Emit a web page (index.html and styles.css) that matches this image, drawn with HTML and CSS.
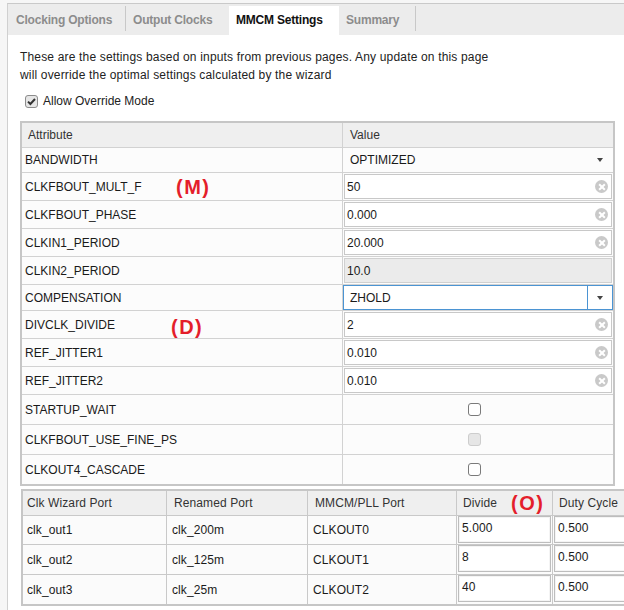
FILE: index.html
```html
<!DOCTYPE html>
<html>
<head>
<meta charset="utf-8">
<link rel="stylesheet" href="styles.css">
</head>
<body>
<div class="panel">
  <div class="tabs">
    <div class="tab w1">Clocking Options</div>
    <div class="sep"></div>
    <div class="tab w2">Output Clocks</div>
    <div class="tab active">MMCM Settings</div>
    <div class="tab w4">Summary</div>
    <div class="sep"></div>
  </div>
  <div class="content">
    <p class="intro">These are the settings based on inputs from previous pages. Any update on this page<br>will override the optimal settings calculated by the wizard</p>
    <div class="override">
      <span class="cb cb-on"><svg width="13" height="13" viewBox="0 0 13 13"><path d="M3 6.6 L5.4 9 L10 4" fill="none" stroke="#333" stroke-width="2"/></svg></span>
      <span>Allow Override Mode</span>
    </div>

    <div class="ptable">
      <div class="prow head h24"><div class="attr">Attribute</div><div class="val">Value</div></div>
      <div class="prow h25"><div class="attr">BANDWIDTH</div><div class="val combo-plain"><span>OPTIMIZED</span><span class="arrow"></span></div></div>
      <div class="prow h28"><div class="attr">CLKFBOUT_MULT_F<span class="note note-m">(M)</span></div><div class="val"><div class="field"><span>50</span><span class="clear"></span></div></div></div>
      <div class="prow h28"><div class="attr">CLKFBOUT_PHASE</div><div class="val"><div class="field"><span>0.000</span><span class="clear"></span></div></div></div>
      <div class="prow h28"><div class="attr">CLKIN1_PERIOD</div><div class="val"><div class="field"><span>20.000</span><span class="clear"></span></div></div></div>
      <div class="prow h28"><div class="attr">CLKIN2_PERIOD</div><div class="val"><div class="field disabled"><span>10.0</span></div></div></div>
      <div class="prow h26"><div class="attr">COMPENSATION</div><div class="val"><div class="combo"><span class="combo-text">ZHOLD</span><span class="combo-btn"><span class="arrow"></span></span></div></div></div>
      <div class="prow h28"><div class="attr">DIVCLK_DIVIDE<span class="note note-d">(D)</span></div><div class="val"><div class="field"><span>2</span><span class="clear"></span></div></div></div>
      <div class="prow h28"><div class="attr">REF_JITTER1</div><div class="val"><div class="field"><span>0.010</span><span class="clear"></span></div></div></div>
      <div class="prow h28"><div class="attr">REF_JITTER2</div><div class="val"><div class="field"><span>0.010</span><span class="clear"></span></div></div></div>
      <div class="prow h30"><div class="attr">STARTUP_WAIT</div><div class="val center"><span class="cb"></span></div></div>
      <div class="prow h30"><div class="attr">CLKFBOUT_USE_FINE_PS</div><div class="val center"><span class="cb cb-dis"></span></div></div>
      <div class="prow h30"><div class="attr">CLKOUT4_CASCADE</div><div class="val center"><span class="cb"></span></div></div>
    </div>

    <div class="ctable">
      <div class="crow chead">
        <div class="c c1">Clk Wizard Port</div>
        <div class="c c2">Renamed Port</div>
        <div class="c c3">MMCM/PLL Port</div>
        <div class="c c4">Divide<span class="note note-o">(O)</span></div>
        <div class="c c5">Duty Cycle</div>
      </div>
      <div class="crow r1">
        <div class="c c1">clk_out1</div>
        <div class="c c2">clk_200m</div>
        <div class="c c3">CLKOUT0</div>
        <div class="c c4"><div class="cfield">5.000</div></div>
        <div class="c c5"><div class="cfield wide">0.500</div></div>
      </div>
      <div class="crow r2">
        <div class="c c1">clk_out2</div>
        <div class="c c2">clk_125m</div>
        <div class="c c3">CLKOUT1</div>
        <div class="c c4"><div class="cfield">8</div></div>
        <div class="c c5"><div class="cfield wide">0.500</div></div>
      </div>
      <div class="crow r2">
        <div class="c c1">clk_out3</div>
        <div class="c c2">clk_25m</div>
        <div class="c c3">CLKOUT2</div>
        <div class="c c4"><div class="cfield">40</div></div>
        <div class="c c5"><div class="cfield wide">0.500</div></div>
      </div>
    </div>
  </div>
</div>
</body>
</html>
```

FILE: styles.css
```css
* { box-sizing: border-box; }
html, body { margin: 0; padding: 0; overflow: hidden; }
body {
  width: 624px;
  height: 610px;
  background: #f6f6f6;
  font-family: "Liberation Sans", Arial, sans-serif;
  font-size: 12px;
  color: #1a1a1a;
}
.panel {
  margin-left: 7px;
  margin-top: 3px;
  height: 607px;
  background: #fff;
  border-left: 1px solid #d0d0d0;
  border-top: 1px solid #c9c9c9;
  overflow: hidden;
}
.tabs {
  display: flex;
  align-items: stretch;
  height: 31px;
  background: #ececec;
}
.tab {
  display: flex;
  align-items: center;
  padding-left: 7px;
  font-weight: bold;
  color: #8c8c8c;
  letter-spacing: -0.2px;
}
.w1 { width: 117px; padding-left: 8px; }
.w2 { width: 103px; }
.w4 { width: 76px; }
.tab.active {
  width: 110px;
  margin-top: 2px;
  background: #fff;
  color: #111;
  padding-bottom: 2px;
}
.sep {
  width: 1px;
  background: #c8c8c8;
  margin: 2px 0 4px;
}
.content {
  padding-left: 12px;
}
.intro {
  margin: 13px 0 0;
  line-height: 18px;
  color: #222;
  letter-spacing: 0.17px;
}
.override {
  display: flex;
  align-items: center;
  height: 18px;
  margin-top: 8px;
  padding-left: 5px;
  gap: 5px;
  color: #222;
}
.cb {
  display: inline-block;
  width: 13px;
  height: 13px;
  border: 1px solid #7a7a7a;
  border-radius: 3px;
  background: #fff;
  position: relative;
}
.cb svg { position: absolute; left: -1px; top: -1px; }
.cb-on { background: #e6e6e6; border-color: #8c8c8c; }
.cb-dis { background: #e6e6e6; border-color: #cdcdcd; }

/* properties table */
.ptable {
  margin-top: 11px;
  width: 595px;
  border: 2px solid #c6c6c6;
  background: #fcfcfc;
}
.prow {
  display: flex;
  border-top: 1px solid #d2d2d2;
}
.prow.head { border-top: 0; background: #efefef; color: #333; }
.h24 { height: 24px; }
.h25 { height: 25px; }
.h26 { height: 26px; }
.h28 { height: 28px; }
.h30 { height: 30px; }
.attr {
  position: relative;
  width: 321px;
  flex: none;
  border-right: 1px solid #d2d2d2;
  display: flex;
  align-items: center;
  padding-left: 3px;
}
.head .attr { padding-left: 6px; }
.val {
  flex: 1;
  display: flex;
  align-items: center;
  padding-left: 7px;
}
.val:has(.field), .val:has(.combo) { padding-left: 0; }
.val.center { justify-content: center; padding-left: 0; padding-right: 8px; }
.combo-plain { justify-content: space-between; padding-right: 10px; }
.arrow {
  width: 0;
  height: 0;
  border-left: 3.5px solid transparent;
  border-right: 3.5px solid transparent;
  border-top: 4px solid #444;
}
.field {
  margin-left: 1px;
  width: 268px;
  height: 25px;
  border: 1px solid #c8c8c8;
  background: #fff;
  display: flex;
  align-items: center;
  justify-content: space-between;
  padding: 0 2px 0 2px;
}
.field.disabled { background: #ebebeb; border-color: #d0d0d0; }
.clear {
  width: 13px;
  height: 13px;
  border-radius: 50%;
  background: #c9c9c9;
  position: relative;
  margin-right: 1px;
}
.clear::before, .clear::after {
  content: "";
  position: absolute;
  left: 2.5px;
  top: 5.5px;
  width: 8px;
  height: 2px;
  background: #fff;
  transform: rotate(45deg);
}
.clear::after { transform: rotate(-45deg); }
.combo {
  width: 270px;
  height: 25px;
  border: 1px solid #4b94d3;
  background: #fff;
  display: flex;
}
.combo-text {
  flex: 1;
  display: flex;
  align-items: center;
  padding-left: 6px;
  border-right: 1px solid #4b94d3;
}
.combo-btn {
  width: 24px;
  display: flex;
  align-items: center;
  justify-content: center;
}
.note {
  position: absolute;
  top: 50%;
  transform: translateY(-50%);
  font-size: 20px;
  font-weight: bold;
  color: #e41e2b;
  line-height: 1;
  letter-spacing: 1.5px;
}
.note-m { left: 154px; }
.note-d { left: 149px; transform: translateY(-42%); }
.note-o { left: 54px; }

/* clock table */
.ctable {
  margin-top: 3px;
  margin-left: 1px;
  width: 603px;
  border: 2px solid #c6c6c6;
  border-right: 0;
  background: #fbfbfb;
}
.crow { display: flex; border-top: 1px solid #c9c9c9; letter-spacing: 0.1px; }
.chead { border-top: 0; height: 24px; background: #efefef; color: #333; }
.r1 { height: 29px; }
.r2 { height: 30px; }
.c {
  flex: none;
  display: flex;
  align-items: center;
  border-right: 1px solid #c9c9c9;
  padding-left: 5px;
  position: relative;
}
.chead .c { padding-left: 7px; }
.chead .c1 { padding-left: 6px; }
.crow .c1 { padding-left: 4px; }
.c1 { width: 144px; }
.c2 { width: 141px; }
.c3 { width: 149px; }
.c4 { width: 96px; }
.c5 { flex: 1; min-width: 0; border-right: 0; overflow: hidden; white-space: nowrap; }
.crow .c4, .crow .c5 { padding-left: 1px; align-items: flex-start; }
.chead .c4, .chead .c5 { padding-left: 6px; align-items: center; }
.cfield {
  flex: none;
  width: 93px;
  height: 27px;
  border: 1px solid #bdbdbd;
  box-shadow: inset 0 0 0 1px #f4f4f4;
  background: #fff;
  padding: 3px 0 0 3px;
  line-height: 17px;
}
.cfield.wide { width: 120px; }
```
